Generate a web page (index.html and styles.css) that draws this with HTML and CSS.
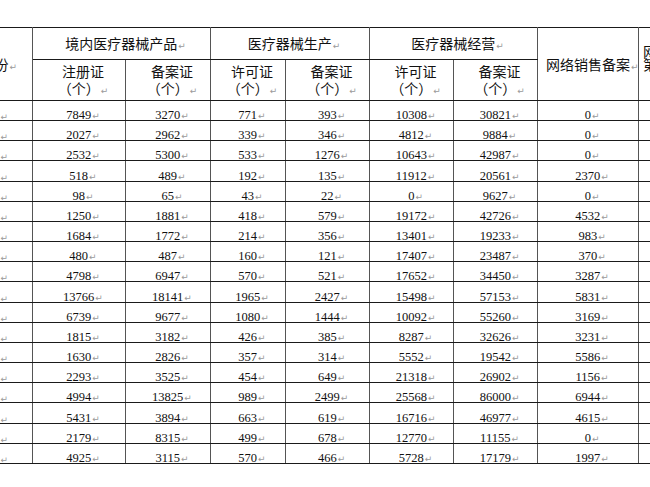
FILE: index.html
```html
<!DOCTYPE html>
<html lang="zh-CN">
<head>
<meta charset="utf-8">
<title>医疗器械统计表</title>
<link rel="stylesheet" href="styles.css">
</head>
<body>
<table class="sheet">
  <colgroup>
    <col class="c-prov">
    <col class="c-a">
    <col class="c-b">
    <col class="c-c">
    <col class="c-d">
    <col class="c-e">
    <col class="c-f">
    <col class="c-g">
    <col class="c-h">
  </colgroup>
  <thead>
    <tr class="h1">
      <th rowspan="2" class="prov-h">省份<span class="pm">↵</span></th>
      <th colspan="2">境内医疗器械产品<span class="pm">↵</span></th>
      <th colspan="2">医疗器械生产<span class="pm">↵</span></th>
      <th colspan="2">医疗器械经营<span class="pm">↵</span></th>
      <th rowspan="2">网络销售备案<span class="pm">↵</span></th>
      <th rowspan="2" class="edge">网络交易服务<br>第三方平台<br>（个）<span class="pm">↵</span></th>
    </tr>
    <tr class="h2">
      <th>注册证<br>（个）<span class="pm">↵</span></th>
      <th>备案证<br>（个）<span class="pm">↵</span></th>
      <th>许可证<br>（个）<span class="pm">↵</span></th>
      <th>备案证<br>（个）<span class="pm">↵</span></th>
      <th>许可证<br>（个）<span class="pm">↵</span></th>
      <th>备案证<br>（个）<span class="pm">↵</span></th>
    </tr>
  </thead>
  <tbody>
    <tr><td class="prov">北京<span class="pm">↵</span></td><td>7849<span class="pm">↵</span></td><td>3270<span class="pm">↵</span></td><td>771<span class="pm">↵</span></td><td>393<span class="pm">↵</span></td><td>10308<span class="pm">↵</span></td><td>30821<span class="pm">↵</span></td><td>0<span class="pm">↵</span></td><td></td></tr>
    <tr><td class="prov">天津<span class="pm">↵</span></td><td>2027<span class="pm">↵</span></td><td>2962<span class="pm">↵</span></td><td>339<span class="pm">↵</span></td><td>346<span class="pm">↵</span></td><td>4812<span class="pm">↵</span></td><td>9884<span class="pm">↵</span></td><td>0<span class="pm">↵</span></td><td></td></tr>
    <tr><td class="prov">河北<span class="pm">↵</span></td><td>2532<span class="pm">↵</span></td><td>5300<span class="pm">↵</span></td><td>533<span class="pm">↵</span></td><td>1276<span class="pm">↵</span></td><td>10643<span class="pm">↵</span></td><td>42987<span class="pm">↵</span></td><td>0<span class="pm">↵</span></td><td></td></tr>
    <tr><td class="prov">山西<span class="pm">↵</span></td><td>518<span class="pm">↵</span></td><td>489<span class="pm">↵</span></td><td>192<span class="pm">↵</span></td><td>135<span class="pm">↵</span></td><td>11912<span class="pm">↵</span></td><td>20561<span class="pm">↵</span></td><td>2370<span class="pm">↵</span></td><td></td></tr>
    <tr><td class="prov">内蒙古<span class="pm">↵</span></td><td>98<span class="pm">↵</span></td><td>65<span class="pm">↵</span></td><td>43<span class="pm">↵</span></td><td>22<span class="pm">↵</span></td><td>0<span class="pm">↵</span></td><td>9627<span class="pm">↵</span></td><td>0<span class="pm">↵</span></td><td></td></tr>
    <tr><td class="prov">辽宁<span class="pm">↵</span></td><td>1250<span class="pm">↵</span></td><td>1881<span class="pm">↵</span></td><td>418<span class="pm">↵</span></td><td>579<span class="pm">↵</span></td><td>19172<span class="pm">↵</span></td><td>42726<span class="pm">↵</span></td><td>4532<span class="pm">↵</span></td><td></td></tr>
    <tr><td class="prov">吉林<span class="pm">↵</span></td><td>1684<span class="pm">↵</span></td><td>1772<span class="pm">↵</span></td><td>214<span class="pm">↵</span></td><td>356<span class="pm">↵</span></td><td>13401<span class="pm">↵</span></td><td>19233<span class="pm">↵</span></td><td>983<span class="pm">↵</span></td><td></td></tr>
    <tr><td class="prov">黑龙江<span class="pm">↵</span></td><td>480<span class="pm">↵</span></td><td>487<span class="pm">↵</span></td><td>160<span class="pm">↵</span></td><td>121<span class="pm">↵</span></td><td>17407<span class="pm">↵</span></td><td>23487<span class="pm">↵</span></td><td>370<span class="pm">↵</span></td><td></td></tr>
    <tr><td class="prov">上海<span class="pm">↵</span></td><td>4798<span class="pm">↵</span></td><td>6947<span class="pm">↵</span></td><td>570<span class="pm">↵</span></td><td>521<span class="pm">↵</span></td><td>17652<span class="pm">↵</span></td><td>34450<span class="pm">↵</span></td><td>3287<span class="pm">↵</span></td><td></td></tr>
    <tr><td class="prov">江苏<span class="pm">↵</span></td><td>13766<span class="pm">↵</span></td><td>18141<span class="pm">↵</span></td><td>1965<span class="pm">↵</span></td><td>2427<span class="pm">↵</span></td><td>15498<span class="pm">↵</span></td><td>57153<span class="pm">↵</span></td><td>5831<span class="pm">↵</span></td><td></td></tr>
    <tr><td class="prov">浙江<span class="pm">↵</span></td><td>6739<span class="pm">↵</span></td><td>9677<span class="pm">↵</span></td><td>1080<span class="pm">↵</span></td><td>1444<span class="pm">↵</span></td><td>10092<span class="pm">↵</span></td><td>55260<span class="pm">↵</span></td><td>3169<span class="pm">↵</span></td><td></td></tr>
    <tr><td class="prov">安徽<span class="pm">↵</span></td><td>1815<span class="pm">↵</span></td><td>3182<span class="pm">↵</span></td><td>426<span class="pm">↵</span></td><td>385<span class="pm">↵</span></td><td>8287<span class="pm">↵</span></td><td>32626<span class="pm">↵</span></td><td>3231<span class="pm">↵</span></td><td></td></tr>
    <tr><td class="prov">福建<span class="pm">↵</span></td><td>1630<span class="pm">↵</span></td><td>2826<span class="pm">↵</span></td><td>357<span class="pm">↵</span></td><td>314<span class="pm">↵</span></td><td>5552<span class="pm">↵</span></td><td>19542<span class="pm">↵</span></td><td>5586<span class="pm">↵</span></td><td></td></tr>
    <tr><td class="prov">江西<span class="pm">↵</span></td><td>2293<span class="pm">↵</span></td><td>3525<span class="pm">↵</span></td><td>454<span class="pm">↵</span></td><td>649<span class="pm">↵</span></td><td>21318<span class="pm">↵</span></td><td>26902<span class="pm">↵</span></td><td>1156<span class="pm">↵</span></td><td></td></tr>
    <tr><td class="prov">山东<span class="pm">↵</span></td><td>4994<span class="pm">↵</span></td><td>13825<span class="pm">↵</span></td><td>989<span class="pm">↵</span></td><td>2499<span class="pm">↵</span></td><td>25568<span class="pm">↵</span></td><td>86000<span class="pm">↵</span></td><td>6944<span class="pm">↵</span></td><td></td></tr>
    <tr><td class="prov">河南<span class="pm">↵</span></td><td>5431<span class="pm">↵</span></td><td>3894<span class="pm">↵</span></td><td>663<span class="pm">↵</span></td><td>619<span class="pm">↵</span></td><td>16716<span class="pm">↵</span></td><td>46977<span class="pm">↵</span></td><td>4615<span class="pm">↵</span></td><td></td></tr>
    <tr><td class="prov">湖北<span class="pm">↵</span></td><td>2179<span class="pm">↵</span></td><td>8315<span class="pm">↵</span></td><td>499<span class="pm">↵</span></td><td>678<span class="pm">↵</span></td><td>12770<span class="pm">↵</span></td><td>11155<span class="pm">↵</span></td><td>0<span class="pm">↵</span></td><td></td></tr>
    <tr><td class="prov">湖南<span class="pm">↵</span></td><td>4925<span class="pm">↵</span></td><td>3115<span class="pm">↵</span></td><td>570<span class="pm">↵</span></td><td>466<span class="pm">↵</span></td><td>5728<span class="pm">↵</span></td><td>17179<span class="pm">↵</span></td><td>1997<span class="pm">↵</span></td><td></td></tr>
  </tbody>
</table>
</body>
</html>
```
FILE: styles.css
```css
html, body {
  margin: 0;
  padding: 0;
  background: #ffffff;
  width: 650px;
  height: 487px;
  overflow: hidden;
}

.sheet {
  margin: 27px 0 0 -48px;
  border-collapse: collapse;
  table-layout: fixed;
  width: 786px;
  color: #111;
}

.c-prov { width: 80px; }
.c-a { width: 93px; }
.c-b { width: 85px; }
.c-c { width: 75px; }
.c-d { width: 84px; }
.c-e { width: 84px; }
.c-f { width: 84px; }
.c-g { width: 101px; }
.c-h { width: 100px; }

.sheet th,
.sheet td {
  border-top: 1px solid #1a1a1a;
  border-bottom: 1px solid #1a1a1a;
  border-left: 1px solid #555;
  border-right: 1px solid #555;
  text-align: center;
  padding: 0 0 0 8px;
}

.sheet th {
  font-family: "Noto Sans CJK SC", "Noto Sans", sans-serif;
  font-weight: normal;
  font-size: 14px;
  line-height: 17px;
  vertical-align: middle;
  white-space: nowrap;
}

.h1 { height: 32px; }
.h2 { height: 41px; }

.sheet th.prov-h {
  text-align: right;
  padding: 0 15px 0 0;
}

.sheet th.edge {
  text-align: left;
  padding: 0 0 0 4px;
  line-height: 13px;
}

.sheet tbody tr { height: 20.17px; }

.sheet td {
  font-family: "Liberation Serif", "Times New Roman", serif;
  font-size: 12.5px;
  line-height: 10px;
  vertical-align: bottom;
  white-space: nowrap;
}

.sheet td.prov {
  font-family: "Noto Sans CJK SC", sans-serif;
  font-size: 12px;
  text-align: right;
  padding: 0 24px 0 0;
}

.pm {
  font-family: "DejaVu Sans", sans-serif;
  font-size: 9px;
  line-height: 0;
  color: #9a9a9a;
  margin-left: 1px;
}
```
